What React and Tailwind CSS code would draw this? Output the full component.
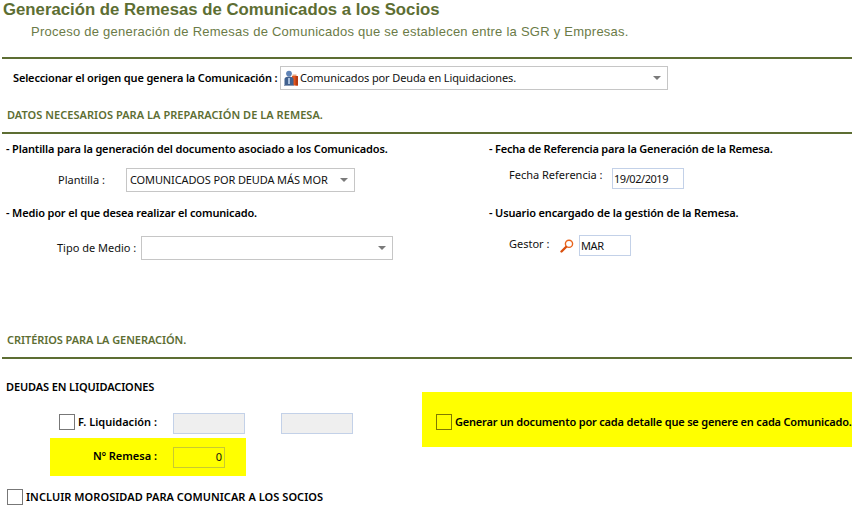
const T = "font-['Noto_Sans','Liberation_Sans',sans-serif] text-[11px] leading-[14px]";

function Caret() {
  return <span className="w-0 h-0 shrink-0 border-x-[4px] border-x-transparent border-t-[4px] border-t-[#7a7a7a]" />;
}

function Select({ className, children }) {
  return (
    <div className={`flex items-center justify-between bg-white border border-[#c6c6c6] h-6 ${className}`}>
      <div className={`flex items-center min-w-0 whitespace-nowrap tracking-[-0.12px] ${T} text-[#111]`}>{children}</div>
      <Caret />
    </div>
  );
}

function Input({ className, children }) {
  return <div className={`flex items-center border h-[21px] ${T} text-[#111] ${className}`}>{children}</div>;
}

function Check({ className }) {
  return <span className={`block w-4 h-4 shrink-0 border ${className}`} />;
}

function PeopleIcon() {
  return (
    <svg width="16" height="17" viewBox="0 0 16 17" className="shrink-0">
      <path d="M9 6h6v9.5H9z" fill="#e2571e" />
      <path d="M12.5 6H15v9.5h-2.5z" fill="#b83a10" />
      <path d="M9.5 4.5h4V6h-4z" fill="#e9a07a" />
      <circle cx="6" cy="3.6" r="2.9" fill="#5f83b6" />
      <path d="M1.5 15V9C1.5 7.2 3.4 6.4 6 6.4s4.5.8 4.5 2.6v6z" fill="#41618f" />
      <path d="M5 8h2v6H5z" fill="#a9bfdc" />
      <path d="M1 15h10v1H1z" fill="#8a9bb5" />
    </svg>
  );
}

function SearchIcon() {
  return (
    <svg width="14" height="14" viewBox="0 0 14 14" className="block">
      <circle cx="9" cy="4.8" r="3.6" fill="none" stroke="#e8641c" strokeWidth="1.4" />
      <path d="M6 8 1.5 12.5" stroke="#d9500f" strokeWidth="2.4" strokeLinecap="round" />
    </svg>
  );
}

const Rule = ({ className = "" }) => <div className={`h-0.5 ml-0.5 bg-[#5d6e33] ${className}`} />;
const Heading = ({ children, className = "" }) => <div className={`${T} font-semibold text-[#5d6e33] pl-[7px] ${className}`}>{children}</div>;
const Sub = ({ children, className = "tracking-[-0.15px]" }) => <div className={`${T} font-semibold text-black ${className}`}>{children}</div>;

export default function App() {
  return (
    <div className="w-[852px] h-[509px] overflow-hidden bg-white">
      <h1 className="font-['Liberation_Sans',sans-serif] font-bold text-[16.75px] leading-[18px] text-[#5d6e33] pl-[3px] pt-px">
        Generación de Remesas de Comunicados a los Socios
      </h1>
      <p className="font-['Liberation_Sans',sans-serif] text-[13px] leading-[16px] tracking-[0.25px] text-[#6b7b47] pl-[31px] mt-[5px]">
        Proceso de generación de Remesas de Comunicados que se establecen entre la SGR y Empresas.
      </p>
      <Rule className="mt-[17px]" />

      <div className="flex items-center mt-[7px] pl-[13px]">
        <span className={`${T} font-semibold tracking-[-0.16px] whitespace-nowrap text-black w-[267px]`}>Seleccionar el origen que genera la Comunicación :</span>
        <Select className="w-[388px] pl-0.5 pr-1.5">
          <PeopleIcon />
          <span className="ml-[1px]">Comunicados por Deuda en Liquidaciones.</span>
        </Select>
      </div>

      <div className="mt-[18px]"><Heading className="tracking-[0.04px]">DATOS NECESARIOS PARA LA PREPARACIÓN DE LA REMESA.</Heading></div>
      <Rule className="mt-[10px]" />

      <div className="grid grid-cols-[489px_1fr] mt-[8px] h-[180px]">
        <div className="pl-1.5">
          <Sub>- Plantilla para la generación del documento asociado a los Comunicados.</Sub>
          <div className="flex items-center mt-[12px] pl-[52px]">
            <span className={`${T} text-[#111] w-[68px]`}>Plantilla :</span>
            <Select className="w-[229px] pl-[3px] pr-1.5">COMUNICADOS POR DEUDA MÁS MOR</Select>
          </div>
          <div className="mt-[14px]"><Sub>- Medio por el que desea realizar el comunicado.</Sub></div>
          <div className="flex items-center mt-[16px] pl-[51px]">
            <span className={`${T} text-[#111] w-[84px]`}>Tipo de Medio :</span>
            <Select className="w-[252px] pr-1.5" />
          </div>
        </div>
        <div>
          <Sub className="tracking-[-0.2px]">- Fecha de Referencia para la Generación de la Remesa.</Sub>
          <div className="flex items-start mt-[12px] pl-5">
            <span className={`${T} text-[#111] w-[103px]`}>Fecha Referencia :</span>
            <Input className="w-[72px] border-[#c3d1e8] pl-px tracking-[-0.45px]">19/02/2019</Input>
          </div>
          <div className="mt-[17px]"><Sub>- Usuario encargado de la gestión de la Remesa.</Sub></div>
          <div className="flex items-start mt-[15px] pl-5">
            <span className={`${T} text-[#111] w-[51px] mt-0.5`}>Gestor :</span>
            <span className="mt-1 w-[19px]"><SearchIcon /></span>
            <Input className="w-[52px] border-[#c3d1e8] pl-px tracking-[-0.4px]">MAR</Input>
          </div>
        </div>
      </div>

      <div className="mt-[11px]"><Heading className="tracking-[-0.07px]">CRITÉRIOS PARA LA GENERACIÓN.</Heading></div>
      <Rule className="mt-[10px]" />

      <div className="flex mt-[21px]">
        <div className="w-[422px] shrink-0 pl-1.5">
          <div className={`${T} font-semibold tracking-[-0.12px] text-black`}>DEUDAS EN LIQUIDACIONES</div>
          <div className="flex items-start mt-[19px] pl-[53px]">
            <Check className="border-[#777] mt-px" />
            <span className={`${T} font-semibold text-black w-[98px] pl-[3px] mt-0.5`}>F. Liquidación :</span>
            <Input className="w-[72px] bg-[#efefef] border-[#c3d1e8]" />
            <Input className="w-[72px] bg-[#efefef] border-[#c3d1e8] ml-9" />
          </div>
          <div className="flex items-center w-[196px] h-[38px] ml-11 mt-1 bg-[#ffff00] pr-[21px]">
            <span className={`${T} font-semibold text-black w-[107px] text-right mb-0.5`}>Nº Remesa :</span>
            <Input className="w-[52px] ml-4 justify-end pr-0.5 border-[#c9c930]">0</Input>
          </div>
          <div className="flex items-center mt-[13px] pl-px gap-[3px]">
            <Check className="border-[#777]" />
            <span className={`${T} font-semibold tracking-[0.05px] text-black`}>INCLUIR MOROSIDAD PARA COMUNICAR A LOS SOCIOS</span>
          </div>
        </div>
        <div className="flex-1 flex items-center h-[55px] mt-[12px] bg-[#ffff00] pl-3.5 pt-[5px] gap-[3px]">
          <Check className="border-[#807a00]" />
          <span className={`${T} font-semibold tracking-[-0.19px] text-black whitespace-nowrap`}>Generar un documento por cada detalle que se genere en cada Comunicado.</span>
        </div>
      </div>
    </div>
  );
}
